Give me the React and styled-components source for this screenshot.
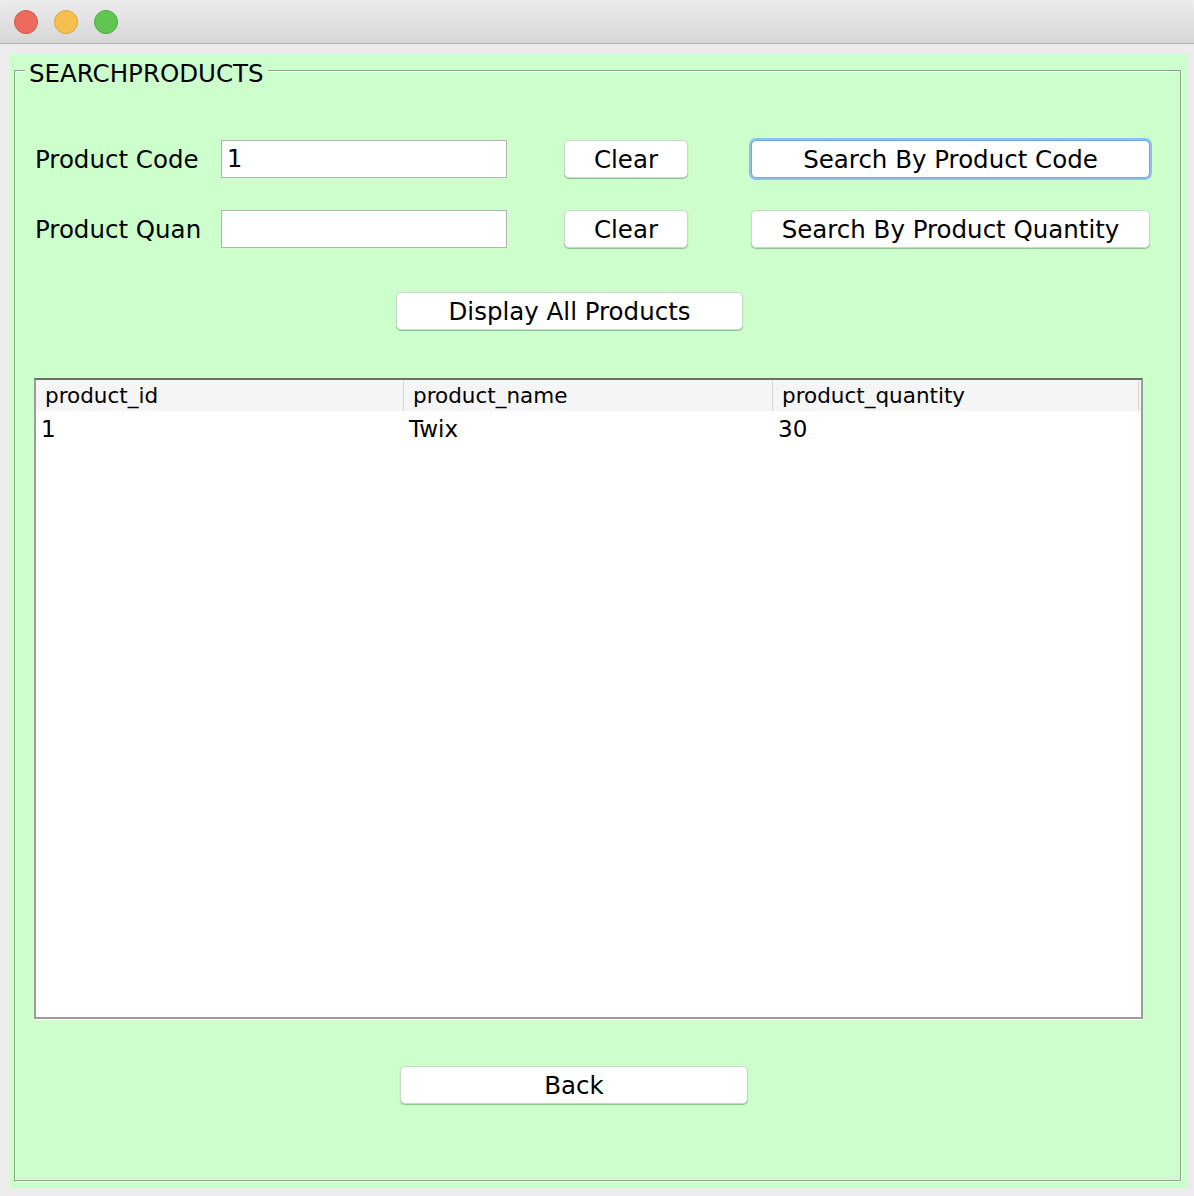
import React from "react";
import styled, { createGlobalStyle } from "styled-components";

const GlobalStyle = createGlobalStyle`
  html, body {
    margin: 0;
    padding: 0;
    background: #ececec;
  }
  body {
    font-family: "DejaVu Sans", "Liberation Sans", sans-serif;
    color: #000;
  }
`;

const products = [{ id: 1, name: "Twix", quantity: 30 }];

function App() {
  return (
    <>
      <GlobalStyle />
      <Window>
        <TitleBar>
          <Light color="#ed6a5e" edge="#d2574b" />
          <Light color="#f5bf4f" edge="#d9a33c" />
          <Light color="#61c554" edge="#4ea842" />
        </TitleBar>
        <Body>
          <Panel>
            <Group>
              <Legend>SEARCHPRODUCTS</Legend>

              <Row top={68}>
                <Label>Product Code</Label>
                <Field defaultValue="1" />
                <Button width={124} left={57}>Clear</Button>
                <Button width={399} left={63} focused>
                  Search By Product Code
                </Button>
              </Row>
              <Row top={30}>
                <Label>Product Quan</Label>
                <Field defaultValue="" />
                <Button width={124} left={57}>Clear</Button>
                <Button width={399} left={63}>
                  Search By Product Quantity
                </Button>
              </Row>

              <Row top={42}>
                <Button width={347} left={361}>Display All Products</Button>
              </Row>

              <Table>
                <HeaderRow>
                  <HeadCell>product_id</HeadCell>
                  <HeadCell>product_name</HeadCell>
                  <HeadCell>product_quantity</HeadCell>
                </HeaderRow>
                {products.map(({ id, name, quantity }) => (
                  <DataRow key={id}>
                    <Cell>{id}</Cell>
                    <Cell>{name}</Cell>
                    <Cell>{quantity}</Cell>
                  </DataRow>
                ))}
              </Table>

              <Row top={46}>
                <Button width={348} left={365}>Back</Button>
              </Row>
            </Group>
          </Panel>
        </Body>
      </Window>
    </>
  );
}

const Window = styled.div`
  width: 1194px;
  height: 1196px;
  display: flex;
  flex-direction: column;
  background: #ececec;
  overflow: hidden;
`;

const TitleBar = styled.div`
  height: 43px;
  flex-shrink: 0;
  display: flex;
  align-items: center;
  gap: 16px;
  padding-left: 14px;
  background: linear-gradient(#ececec, #d6d6d6);
  border-bottom: 1px solid #b4b4b4;
  border-radius: 10px 10px 0 0;
`;

const Light = styled.span`
  width: 22px;
  height: 22px;
  border-radius: 50%;
  background: ${(p) => p.color};
  border: 1px solid ${(p) => p.edge};
`;

const Body = styled.div`
  flex: 1;
  padding: 10px 6px 8px 10px;
  display: flex;
`;

const Panel = styled.div`
  flex: 1;
  background: #ccffcc;
  padding: 16px 7px 7px 4px;
  display: flex;
`;

const Group = styled.div`
  position: relative;
  flex: 1;
  border: 1px solid #8aa88a;
  box-shadow: 1px 1px 0 #ffffff, inset 1px 1px 0 #ffffff;
  display: flex;
  flex-direction: column;
  padding: 0 20px 0 19px;
`;

const Legend = styled.span`
  position: absolute;
  left: 10px;
  top: -12px;
  padding: 0 4px;
  background: #ccffcc;
  font-size: 24.5px;
  line-height: 30px;
`;

const Row = styled.div`
  display: flex;
  align-items: center;
  height: 40px;
  margin-top: ${(p) => p.top}px;
  padding-left: 1px;
`;

const Label = styled.span`
  width: 186px;
  font-size: 24.5px;
`;

const Field = styled.input`
  width: 286px;
  height: 38px;
  box-sizing: border-box;
  border: 1px solid #b3b3b3;
  background: #fff;
  padding: 0 5px;
  font-family: inherit;
  font-size: 24px;
  color: #000;
  outline: none;
`;

const Button = styled.button`
  width: ${(p) => p.width}px;
  height: 38px;
  margin-left: ${(p) => p.left}px;
  box-sizing: border-box;
  background: #fff;
  border: 1px solid ${(p) => (p.focused ? "#6fa8e6" : "#c9d9c9")};
  box-shadow: ${(p) =>
    p.focused
      ? "0 0 0 2px #8fbff0"
      : "0 1px 1px rgba(60, 110, 60, 0.45)"};
  border-radius: 5px;
  font-family: inherit;
  font-size: 24.5px;
  color: #000;
  padding: 0;
  cursor: pointer;
`;

const Table = styled.div`
  margin-top: 47px;
  width: 1109px;
  height: 641px;
  box-sizing: border-box;
  background: #fff;
  border: 2px solid #9c9c9c;
  border-top-color: #6e6e6e;
  box-shadow: 0 1px 0 #ffffff;
  display: flex;
  flex-direction: column;
`;

const columns = "368px 369px 366px";

const HeaderRow = styled.div`
  display: grid;
  grid-template-columns: ${columns};
  height: 31px;
  background: #f5f5f5;
  align-items: center;
`;

const HeadCell = styled.div`
  font-size: 21.5px;
  padding-left: 9px;
  height: 31px;
  line-height: 31px;
  border-right: 1px solid #d6d6d6;
  box-sizing: border-box;
`;

const DataRow = styled.div`
  display: grid;
  grid-template-columns: ${columns};
  height: 36px;
  align-items: center;
`;

const Cell = styled.div`
  font-size: 23px;
  padding-left: 5px;
`;

export default App;
